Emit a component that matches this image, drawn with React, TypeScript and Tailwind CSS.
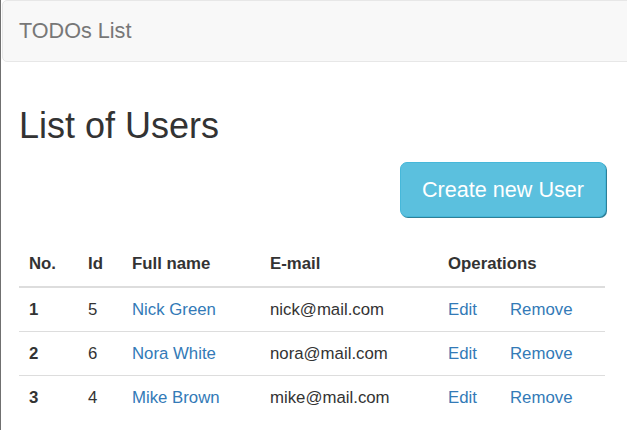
import React from "react";

type User = { no: number; id: number; name: string; email: string };

const USERS: User[] = [
  { no: 1, id: 5, name: "Nick Green", email: "nick@mail.com" },
  { no: 2, id: 6, name: "Nora White", email: "nora@mail.com" },
  { no: 3, id: 4, name: "Mike Brown", email: "mike@mail.com" },
];

export default function App() {
  return (
    <div
      className="min-h-[430px] w-full overflow-hidden border-l border-[#707070] bg-white text-[#333] text-[16.8px] leading-[24px]"
      style={{ fontFamily: '"Liberation Sans", Arial, sans-serif' }}
    >
      {/* navbar */}
      <nav className="ml-px mr-[-10px] flex h-[62px] items-center rounded-[5px] border border-[#e7e7e7] bg-[#f8f8f8] px-[16px]">
        <span className="text-[21.6px] text-[#777]">TODOs List</span>
      </nav>

      <div className="pl-[18px] pr-[21px]">
        <h1 className="mt-[44px] text-[36px] leading-[40px] font-normal text-[#333]">List of Users</h1>

        <div className="mt-[16px] flex justify-end">
          <button
            type="button"
            className="h-[55px] rounded-[7px] border border-[#46b8da] bg-[#5bc0de] px-[21px] text-[21.6px] leading-[29px] text-white shadow-[1px_1px_0_#2f7f97]"
          >
            Create new User
          </button>
        </div>

        {/* users table */}
        <table className="mt-[25px] w-[586px] border-collapse text-left">
          <thead>
            <tr className="border-b-2 border-[#ddd]">
              <th className="w-[59px] px-[10px] py-[10px] font-bold">No.</th>
              <th className="w-[44px] px-[10px] py-[10px] font-bold">Id</th>
              <th className="w-[138px] px-[10px] py-[10px] font-bold">Full name</th>
              <th className="w-[178px] px-[10px] py-[10px] font-bold">E-mail</th>
              <th className="px-[10px] py-[10px] font-bold">Operations</th>
            </tr>
          </thead>
          <tbody>
            {USERS.map((u, i) => (
              <tr key={u.no} className={i > 0 ? "border-t border-[#ddd]" : ""}>
                <td className="px-[10px] py-[9.5px] font-bold">{u.no}</td>
                <td className="px-[10px] py-[9.5px]">{u.id}</td>
                <td className="px-[10px] py-[9.5px] text-[#337ab7]">{u.name}</td>
                <td className="px-[10px] py-[9.5px]">{u.email}</td>
                <td className="px-[10px] py-[9.5px] text-[#337ab7]">
                  <span className="inline-block w-[62px]">Edit</span>
                  <span>Remove</span>
                </td>
              </tr>
            ))}
          </tbody>
        </table>
      </div>
    </div>
  );
}
